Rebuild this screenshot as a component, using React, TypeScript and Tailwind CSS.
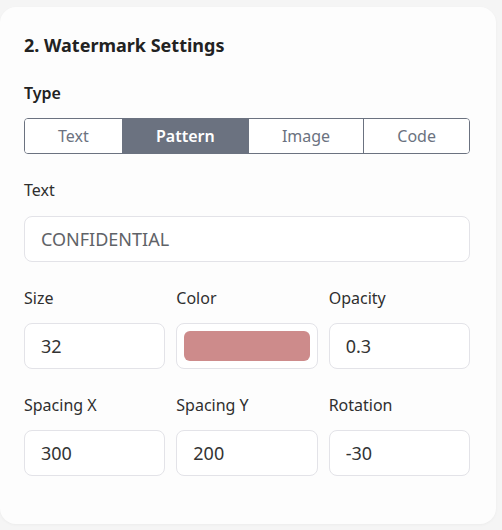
import { useState } from "react";

const types = ["Text", "Pattern", "Image", "Code"];

function Field({ label, value }: { label: string; value: string }) {
  return (
    <div className="flex flex-col">
      <label className="mb-[13px] text-base leading-6 text-[#2f2f2f]">{label}</label>
      <input
        readOnly
        value={value}
        className="h-[46px] w-full rounded-lg border border-[#e3e3e8] bg-white px-4 text-[18px] text-[#333] outline-none"
      />
    </div>
  );
}

export default function App() {
  const [type, setType] = useState("Pattern");

  return (
    <div
      className="min-h-[530px] bg-[#f5f5f5] pt-[7px]"
      style={{ fontFamily: '"Noto Sans", "Open Sans", sans-serif' }}
    >
      <div className="w-[496px] rounded-2xl bg-[#fdfdfd] pt-6 pr-[26px] pb-12 pl-6 shadow-[0_1px_3px_rgba(0,0,0,0.04)]">
        <h2 className="mb-[22px] text-lg leading-7 font-bold text-[#222]">
          2. Watermark Settings
        </h2>

        <div className="mb-6">
          <div className="mb-[13px] text-base leading-6 font-semibold text-[#222]">Type</div>
          <div className="flex h-9 overflow-hidden rounded border border-[#6b7280] divide-x divide-[#6b7280]">
            {types.map((t) => (
              <button
                key={t}
                onClick={() => setType(t)}
                className={
                  type === t
                    ? "flex-auto bg-[#6b7280] text-base font-semibold text-white"
                    : "flex-auto bg-white text-base text-[#6b7280]"
                }
              >
                {t}
              </button>
            ))}
          </div>
        </div>

        <div className="mb-6 flex flex-col">
          <label className="mb-[14px] text-base leading-6 text-[#2f2f2f]">Text</label>
          <input
            readOnly
            value="CONFIDENTIAL"
            className="h-[46px] w-full rounded-lg border border-[#e3e3e8] bg-white px-4 text-[18px] text-[#5f6368] outline-none"
          />
        </div>

        <div className="mb-6 grid grid-cols-3 gap-[11px]">
          <Field label="Size" value="32" />
          <div className="flex flex-col">
            <label className="mb-[13px] text-base leading-6 text-[#2f2f2f]">Color</label>
            <div className="h-[46px] rounded-lg border border-[#e3e3e8] bg-white p-[7px]">
              <div className="h-full w-full rounded-md bg-[#cd8b8b]" />
            </div>
          </div>
          <Field label="Opacity" value="0.3" />
        </div>

        <div className="grid grid-cols-3 gap-[11px]">
          <Field label="Spacing X" value="300" />
          <Field label="Spacing Y" value="200" />
          <Field label="Rotation" value="-30" />
        </div>
      </div>
    </div>
  );
}
